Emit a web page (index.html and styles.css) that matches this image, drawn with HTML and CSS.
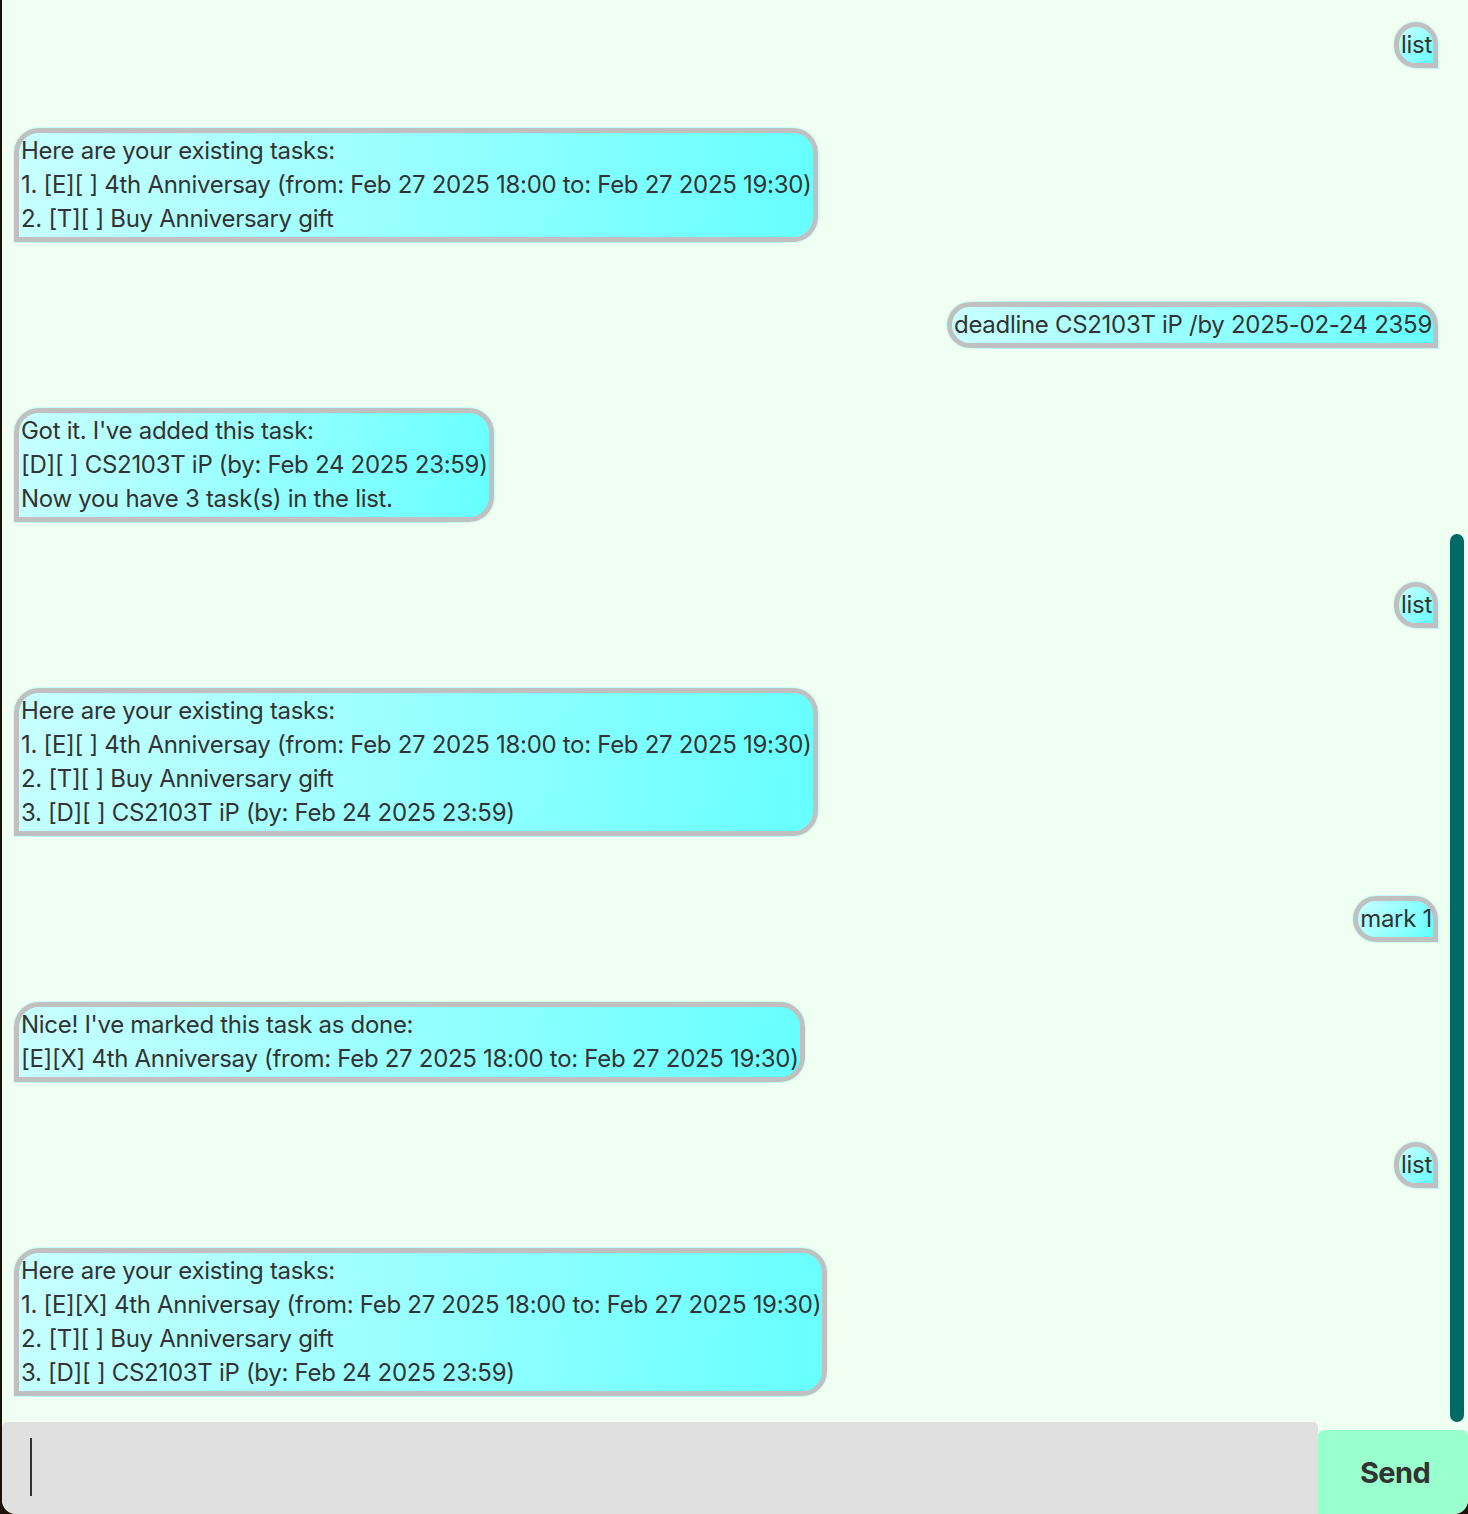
FILE: index.html
```html
<!DOCTYPE html>
<html lang="en">
<head>
<meta charset="utf-8">
<title>Chat</title>
<link rel="stylesheet" href="styles.css">
</head>
<body>
<div class="app">
  <div class="chat">
    <div class="msg user" style="--a: 137deg">list</div>
    <div class="msg duke" style="--a: 98deg">Here are your existing tasks:
1. [E][ ] 4th Anniversay (from: Feb 27 2025 18:00 to: Feb 27 2025 19:30)
2. [T][ ] Buy Anniversary gift</div>
    <div class="msg user" style="--a: 95deg">deadline CS2103T iP /by 2025-02-24 2359</div>
    <div class="msg duke" style="--a: 103deg">Got it. I've added this task:
[D][ ] CS2103T iP (by: Feb 24 2025 23:59)
Now you have 3 task(s) in the list.</div>
    <div class="msg user" style="--a: 137deg">list</div>
    <div class="msg duke" style="--a: 100.5deg">Here are your existing tasks:
1. [E][ ] 4th Anniversay (from: Feb 27 2025 18:00 to: Feb 27 2025 19:30)
2. [T][ ] Buy Anniversary gift
3. [D][ ] CS2103T iP (by: Feb 24 2025 23:59)</div>
    <div class="msg user" style="--a: 119deg">mark 1</div>
    <div class="msg duke" style="--a: 96deg">Nice! I've marked this task as done:
[E][X] 4th Anniversay (from: Feb 27 2025 18:00 to: Feb 27 2025 19:30)</div>
    <div class="msg user" style="--a: 137deg">list</div>
    <div class="msg duke" style="--a: 100.3deg">Here are your existing tasks:
1. [E][X] 4th Anniversay (from: Feb 27 2025 18:00 to: Feb 27 2025 19:30)
2. [T][ ] Buy Anniversary gift
3. [D][ ] CS2103T iP (by: Feb 24 2025 23:59)</div>
    <div class="scroll-thumb"></div>
  </div>
  <div class="bar">
    <div class="input"><span class="caret"></span></div>
    <button class="send">Send</button>
  </div>
</div>
</body>
</html>
```

FILE: styles.css
```css
html, body {
  margin: 0;
  padding: 0;
  height: 100%;
}
body {
  background: #1c120b;
  font-family: Inter, "Noto Sans", sans-serif;
  color: #333333;
  overflow: hidden;
}
.app {
  margin-left: 2px;
  width: 1466px;
  height: 1514px;
  background: #effff1;
  border-radius: 0 0 14px 14px;
  display: flex;
  flex-direction: column;
  overflow: hidden;
}
.chat {
  position: relative;
  height: 1422px;
  box-sizing: border-box;
  padding: 22px 30px 0 12px;
  display: flex;
  flex-direction: column;
  gap: 60px;
  overflow: hidden;
}
.msg {
  --a: 100deg;
  white-space: pre;
  font-size: 24px;
  letter-spacing: -0.3px;
  line-height: 34px;
  border: 5px solid #c0c0c0;
  padding: 1px 1px 1px 2px;
  background: linear-gradient(var(--a), #c8ffff, #66ffff);
  box-shadow: 0 0 0 1px rgba(120, 255, 255, 0.35);
}
.duke {
  align-self: flex-start;
  border-radius: 25px 25px 25px 0;
}
.user {
  align-self: flex-end;
  border-radius: 25px 25px 0 25px;
}
.scroll-thumb {
  position: absolute;
  left: 1448px;
  top: 534px;
  width: 14px;
  height: 888px;
  border-radius: 7px;
  background: #006b66;
}
.bar {
  flex: 1;
  display: flex;
  align-items: flex-end;
}
.input {
  width: 1316px;
  height: 92px;
  box-sizing: border-box;
  background: #e0e0e0;
  border-radius: 5px 5px 0 14px;
  padding: 16px 0 0 28px;
}
.caret {
  display: block;
  width: 1.5px;
  height: 58px;
  background: #333333;
}
.send {
  width: 150px;
  height: 84px;
  border: none;
  margin: 0;
  padding: 0 0 0 4px;
  background: #99ffcc;
  border-radius: 6px 6px 14px 0;
  font-family: Inter, "Noto Sans", sans-serif;
  font-weight: 700;
  font-size: 29px;
  letter-spacing: -0.6px;
  color: #333333;
}
```
